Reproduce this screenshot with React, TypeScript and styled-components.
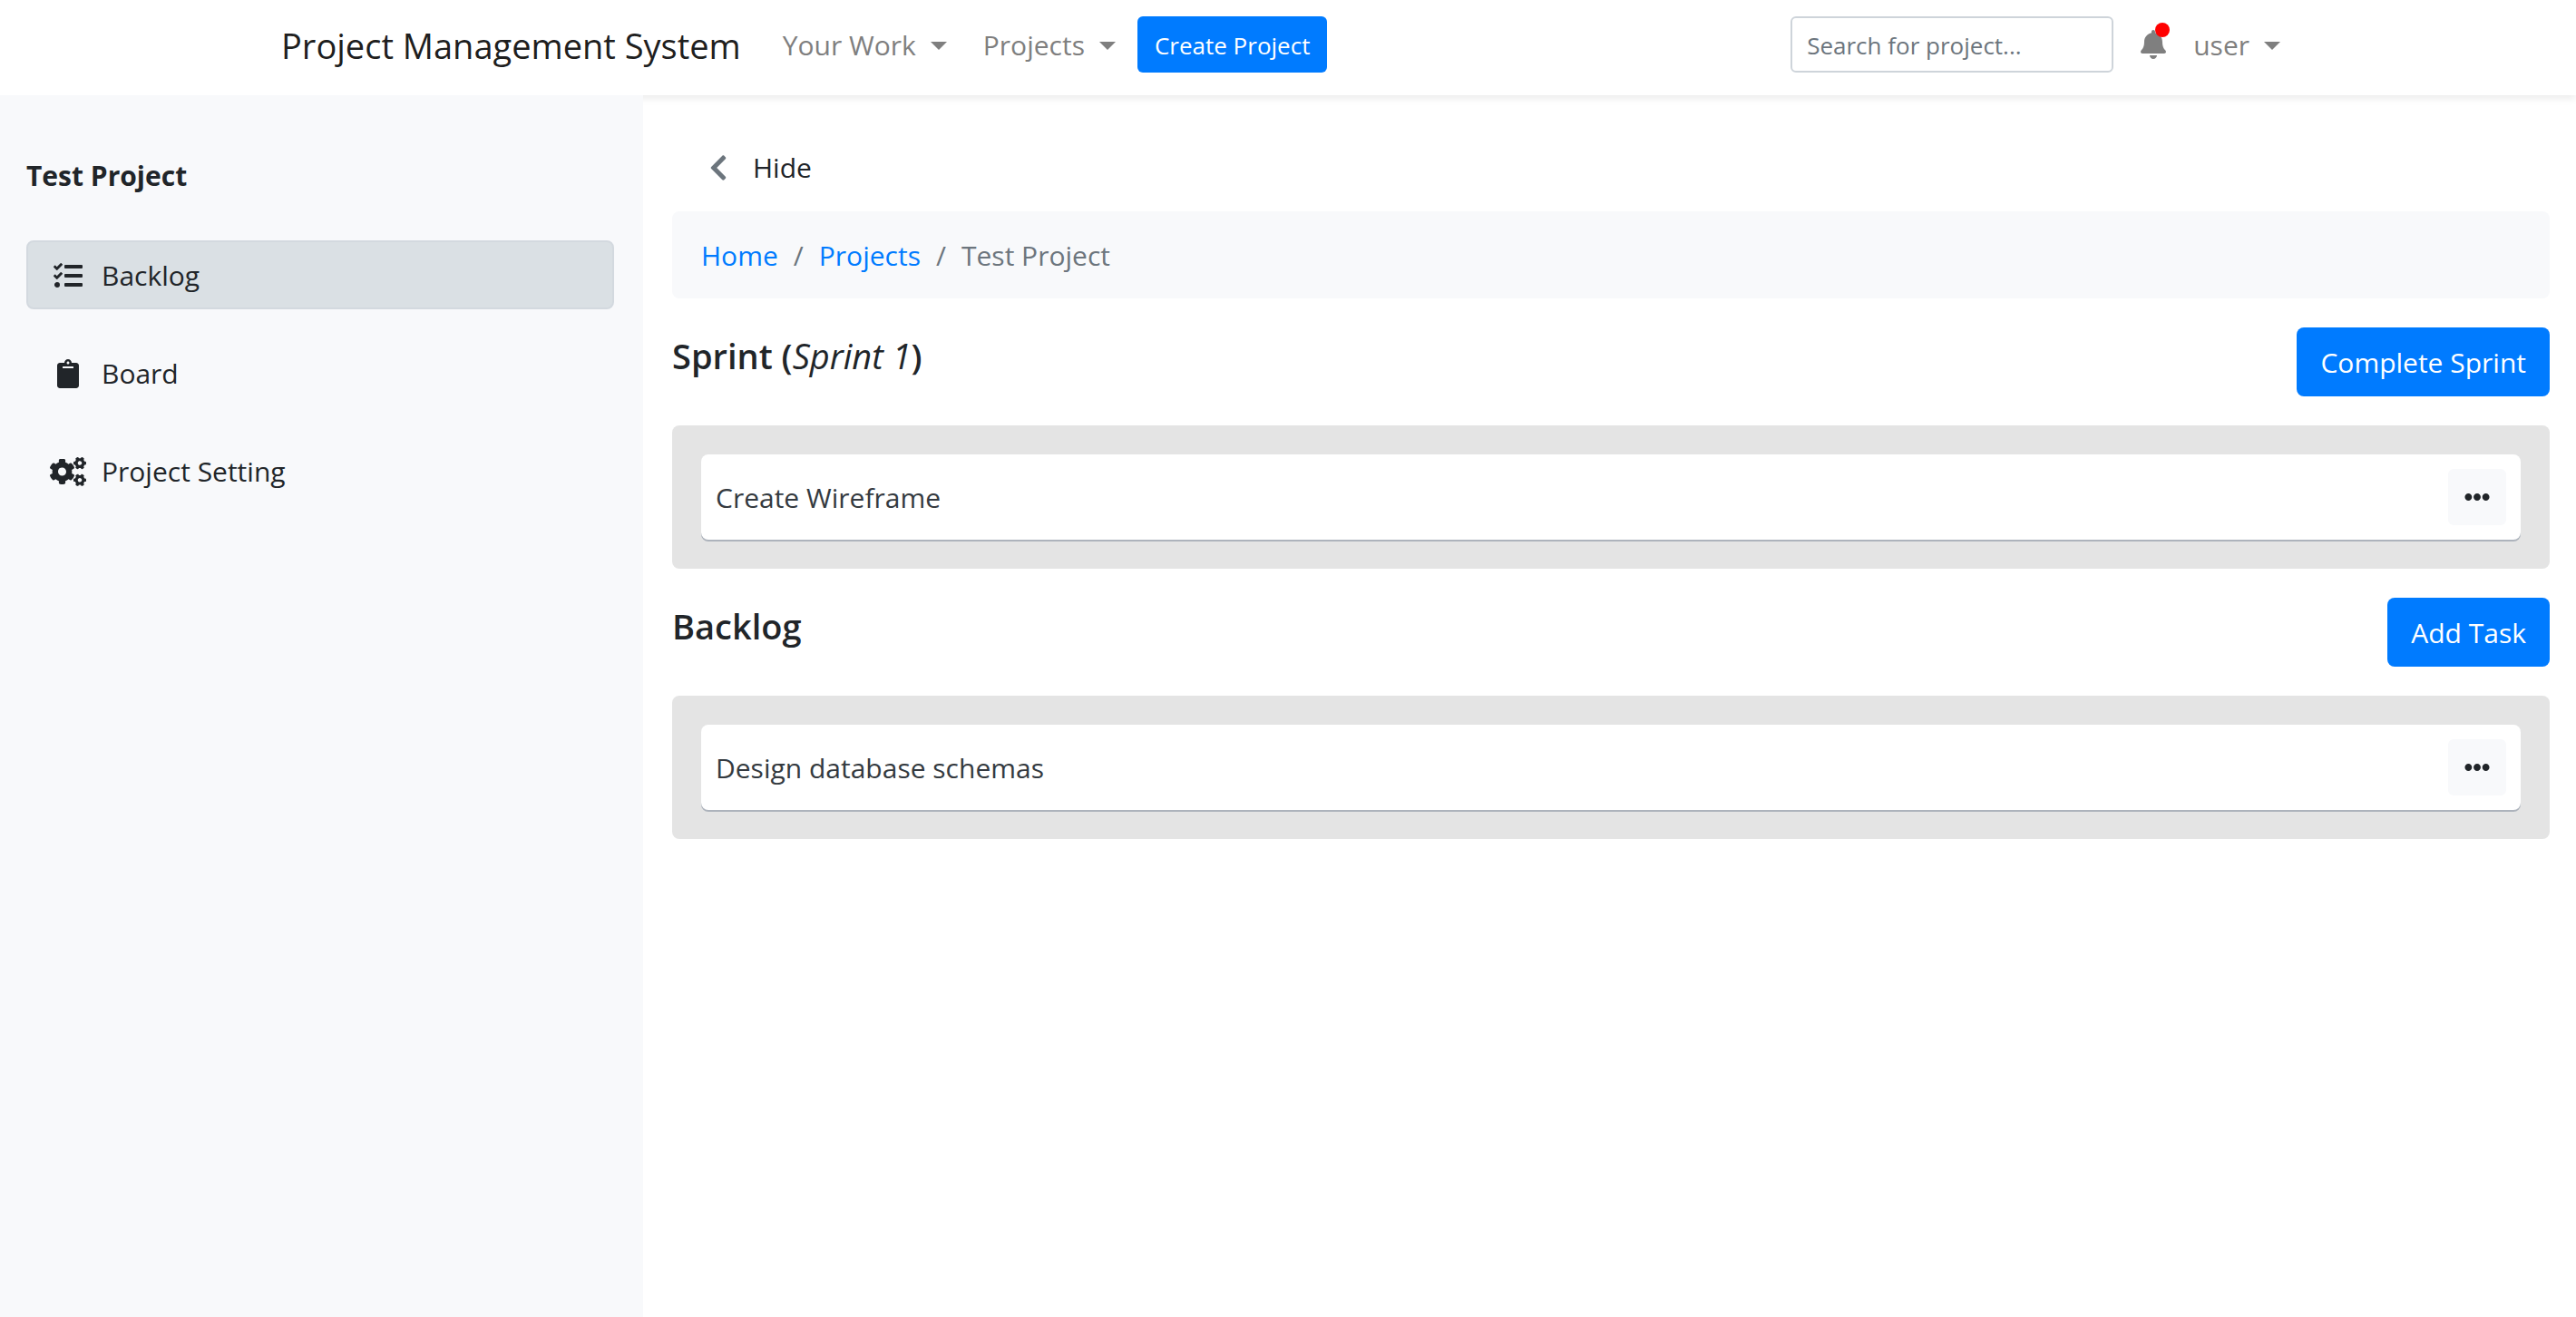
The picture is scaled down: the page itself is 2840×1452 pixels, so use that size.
import React from "react";
import styled, { createGlobalStyle, css } from "styled-components";
import {
  FaBell,
  FaChevronLeft,
  FaClipboard,
  FaCogs,
  FaEllipsisH,
  FaTasks,
} from "react-icons/fa";

const color = {
  primary: "#007bff",
  text: "#212529",
  muted: "#6c757d",
  navLink: "#7f7f7f",
  light: "#f8f9fb",
  border: "#ced4da",
};

const GlobalStyle = createGlobalStyle`
  *, *::before, *::after { box-sizing: border-box; }
  body {
    margin: 0;
    background: #fff;
    color: ${color.text};
    font-family: "Segoe UI", "Open Sans", "Noto Sans", sans-serif;
    font-size: 30px;
    line-height: 48px;
  }
  button, input { font: inherit; }
  button { cursor: pointer; }
  svg { display: block; }
`;

const Navbar = styled.header`
  box-shadow: 0 4px 8px rgba(0, 0, 0, 0.075);
`;

const NavContainer = styled.div`
  display: flex;
  align-items: center;
  justify-content: space-between;
  max-width: 2280px;
  margin: 0 auto;
  padding: 18px 30px 25px;
`;

const NavGroup = styled.nav`
  display: flex;
  align-items: center;
`;

const Brand = styled.a`
  margin-right: 30px;
  padding-top: 2px;
  color: rgba(0, 0, 0, 0.9);
  font-size: 38px;
  text-decoration: none;
  white-space: nowrap;
`;

const NavToggle = styled.button<{ $flush?: boolean }>`
  display: flex;
  align-items: center;
  gap: 16px;
  padding: 2px ${(p) => (p.$flush ? "16px 0 0" : "24px 0 16px")};
  border: 0;
  background: none;
  color: ${color.navLink};
  white-space: nowrap;

  &::after {
    content: "";
    border: 9px solid transparent;
    border-top-color: currentColor;
    border-bottom: 0;
  }
`;

const buttonBase = css`
  border-radius: 8px;
  border: 2px solid transparent;
  white-space: nowrap;
`;

const PrimaryButton = styled.button<{ $small?: boolean }>`
  ${buttonBase}
  background: ${color.primary};
  color: #fff;
  ${(p) =>
    p.$small
      ? css`
          padding: 9px 17px 7px;
          border-radius: 6px;
          font-size: 26px;
          line-height: 42px;
        `
      : css`
          padding: 13px 24px 11px;
        `}
`;

const NavActions = styled.div`
  display: flex;
  align-items: center;
  gap: 30px;
`;

const SearchInput = styled.input`
  width: 356px;
  padding: 9px 16px 7px;
  border: 2px solid ${color.border};
  border-radius: 6px;
  color: #495057;
  font-size: 26px;
  line-height: 42px;
  height: 62px;

  &::placeholder {
    color: ${color.muted};
    opacity: 1;
  }
`;

const BellButton = styled.button`
  position: relative;
  padding: 0;
  border: 0;
  background: none;
  color: ${color.navLink};

  svg {
    width: 28px;
    height: 32px;
  }

  &::after {
    content: "";
    position: absolute;
    top: -8px;
    right: -4px;
    width: 16px;
    height: 16px;
    border-radius: 50%;
    background: red;
  }
`;

const Layout = styled.div`
  display: flex;
  min-height: calc(100vh - 105px);
`;

const Sidebar = styled.aside`
  position: relative;
  flex: 0 0 calc(25% - 1px);
  padding: 65px 32px 32px 29px;
  background: ${color.light};
`;

const ProjectName = styled.h2`
  margin: 0 0 47px;
  font-size: 30px;
  font-weight: 700;
  line-height: 48px;
`;

const Menu = styled.nav`
  display: flex;
  flex-direction: column;
  gap: 32px;
`;

const MenuLink = styled.a<{ $active?: boolean }>`
  display: flex;
  align-items: center;
  gap: 17px;
  padding: 13px 24px 11px;
  border: 2px solid ${(p) => (p.$active ? "#d3d9df" : "transparent")};
  border-radius: 8px;
  background: ${(p) => (p.$active ? "#dae0e4" : "transparent")};
  color: ${color.text};
  text-decoration: none;

  svg {
    width: 40px;
    height: 32px;
  }
`;

const Main = styled.main`
  flex: 1;
  min-width: 0;
  padding: 56px 29px 32px 32px;
`;

const HideButton = styled.button`
  display: flex;
  align-items: center;
  gap: 28px;
  margin: 0 0 24px;
  padding: 0 41px;
  border: 0;
  background: none;
  color: ${color.text};

  svg {
    width: 20px;
    height: 32px;
    color: ${color.muted};
  }
`;

const Breadcrumb = styled.ol`
  display: flex;
  margin: 0 0 32px;
  padding: 25px 32px 23px;
  border-radius: 8px;
  background: ${color.light};
  list-style: none;
`;

const Crumb = styled.li`
  color: ${color.muted};

  & + &::before {
    content: "/";
    padding: 0 17px;
  }

  a {
    color: ${color.primary};
    text-decoration: none;
  }
`;

const Section = styled.section`
  margin-bottom: 32px;
`;

const SectionHeader = styled.div`
  display: flex;
  align-items: flex-start;
  justify-content: space-between;
  margin-bottom: 32px;
`;

const SectionTitle = styled.h1`
  margin: 7px 0 0;
  font-size: 38px;
  font-weight: 600;
  line-height: 48px;

  em {
    font-weight: 400;
  }
`;

const TaskList = styled.ul`
  margin: 0;
  padding: 32px;
  border-radius: 8px;
  background: #e4e4e4;
  list-style: none;
`;

const TaskCard = styled.li`
  display: flex;
  align-items: center;
  justify-content: space-between;
  padding: 16px;
  border-radius: 8px;
  background: #fff;
  box-shadow: 0 2px 0 rgba(9, 30, 66, 0.25);
  color: #343a40;
`;

const TaskName = styled.span`
  padding-top: 2px;
`;

const MoreButton = styled.button`
  ${buttonBase}
  padding: 15px 16px;
  border-radius: 6px;
  background: ${color.light};
  color: ${color.text};
  font-size: 28px;
`;

const menu = [
  { label: "Backlog", icon: <FaTasks />, active: true },
  { label: "Board", icon: <FaClipboard /> },
  { label: "Project Setting", icon: <FaCogs /> },
];

interface BoardSectionProps {
  title: React.ReactNode;
  action: string;
  tasks: string[];
}

function BoardSection({ title, action, tasks }: BoardSectionProps) {
  return (
    <Section>
      <SectionHeader>
        <SectionTitle>{title}</SectionTitle>
        <PrimaryButton type="button">{action}</PrimaryButton>
      </SectionHeader>
      <TaskList>
        {tasks.map((task) => (
          <TaskCard key={task}>
            <TaskName>{task}</TaskName>
            <MoreButton type="button" aria-label={`Options for ${task}`}>
              <FaEllipsisH />
            </MoreButton>
          </TaskCard>
        ))}
      </TaskList>
    </Section>
  );
}

export default function App() {
  return (
    <>
      <GlobalStyle />
      <Navbar>
        <NavContainer>
          <NavGroup>
            <Brand href="#">Project Management System</Brand>
            <NavToggle type="button">Your Work</NavToggle>
            <NavToggle type="button">Projects</NavToggle>
            <PrimaryButton type="button" $small>
              Create Project
            </PrimaryButton>
          </NavGroup>
          <NavActions>
            <SearchInput
              type="text"
              aria-label="Search for project"
              placeholder="Search for project..."
            />
            <BellButton type="button" aria-label="Notifications">
              <FaBell />
            </BellButton>
            <NavToggle type="button" $flush>
              user
            </NavToggle>
          </NavActions>
        </NavContainer>
      </Navbar>
      <Layout>
        <Sidebar>
          <ProjectName>Test Project</ProjectName>
          <Menu>
            {menu.map((item) => (
              <MenuLink key={item.label} href="#" $active={item.active}>
                {item.icon}
                {item.label}
              </MenuLink>
            ))}
          </Menu>
        </Sidebar>
        <Main>
          <HideButton type="button">
            <FaChevronLeft />
            Hide
          </HideButton>
          <Breadcrumb>
            <Crumb>
              <a href="#">Home</a>
            </Crumb>
            <Crumb>
              <a href="#">Projects</a>
            </Crumb>
            <Crumb>Test Project</Crumb>
          </Breadcrumb>
          <BoardSection
            title={
              <>
                Sprint (<em>Sprint 1</em>)
              </>
            }
            action="Complete Sprint"
            tasks={["Create Wireframe"]}
          />
          <BoardSection
            title="Backlog"
            action="Add Task"
            tasks={["Design database schemas"]}
          />
        </Main>
      </Layout>
    </>
  );
}
